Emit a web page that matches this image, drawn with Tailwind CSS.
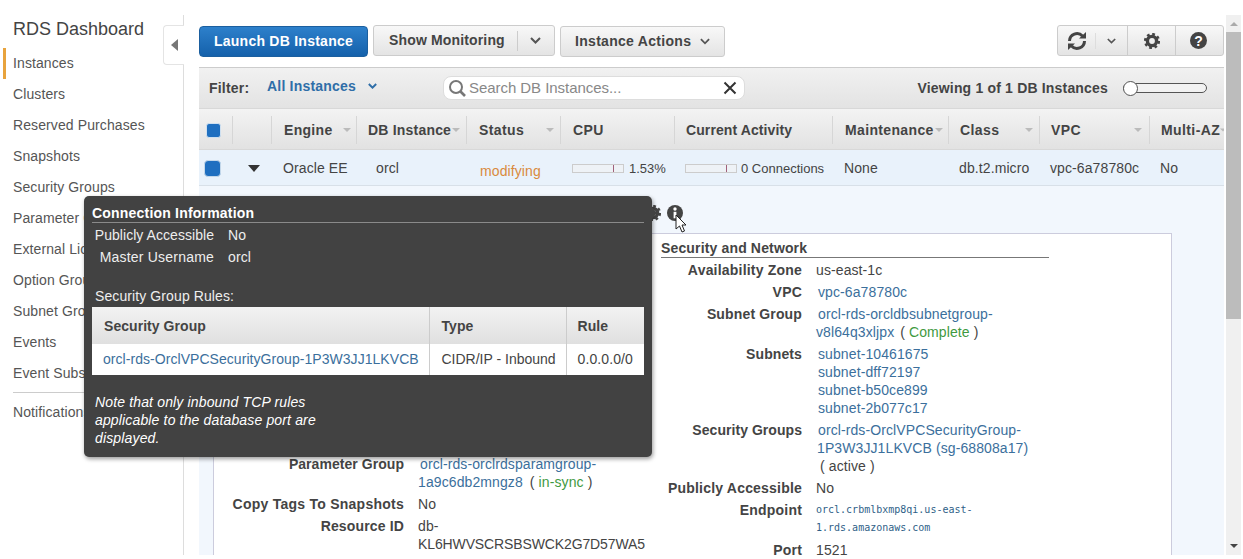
<!DOCTYPE html>
<html lang="en">
<head>
<meta charset="utf-8">
<title>RDS Dashboard</title>
<script src="https://cdn.jsdelivr.net/npm/@tailwindcss/browser@4"></script>
</head>
<body class="bg-white font-['Liberation_Sans',Arial,sans-serif] text-[14px] tracking-[0.1px] text-[#444] overflow-hidden">
<div class="relative flex h-[555px] w-[1243px] overflow-hidden">

  <!-- Sidebar -->
  <aside class="relative w-[184px] shrink-0 mt-[15px] border-r border-[#ddd]">
    <h1 class="pl-[13px] pt-[3px] h-[33px] text-[18px] leading-[22px] tracking-normal text-[#444]">RDS Dashboard</h1>
    <nav class="flex flex-col text-[#555]">
      <a class="h-[31px] leading-[30px] pl-[7px] ml-[3px] border-l-[3px] border-[#e8a33d]">Instances</a>
      <a class="h-[31px] leading-[30px] pl-[13px]">Clusters</a>
      <a class="h-[31px] leading-[30px] pl-[13px]">Reserved Purchases</a>
      <a class="h-[31px] leading-[30px] pl-[13px]">Snapshots</a>
      <a class="h-[31px] leading-[30px] pl-[13px]">Security Groups</a>
      <a class="h-[31px] leading-[30px] pl-[13px]">Parameter Groups</a>
      <a class="h-[31px] leading-[30px] pl-[13px]">External Licenses</a>
      <a class="h-[31px] leading-[30px] pl-[13px]">Option Groups</a>
      <a class="h-[31px] leading-[30px] pl-[13px]">Subnet Groups</a>
      <a class="h-[31px] leading-[30px] pl-[13px]">Events</a>
      <a class="h-[31px] leading-[30px] pl-[13px]">Event Subscriptions</a>
      <div class="ml-[13px] mt-[3px] mb-[4px] border-t border-[#ccc]"></div>
      <a class="h-[31px] leading-[30px] pl-[13px]">Notifications</a>
    </nav>
    <div class="absolute right-[-1px] top-[10px] flex h-[40px] w-[21px] items-center justify-center rounded-l-[4px] border border-r-0 border-[#e4e4e4] bg-white">
      <svg width="7" height="12" viewBox="0 0 7 12"><path d="M7 0v12L0 6z" fill="#777"/></svg>
    </div>
  </aside>

  <!-- Main -->
  <main class="ml-[15px] w-[1025px] shrink-0">
    <!-- Toolbar -->
    <div class="flex h-[67px] items-start pt-[25px]">
      <button class="mt-px h-[31px] w-[169px] rounded-[4px] border border-[#1b5f9f] bg-gradient-to-b from-[#2d80cb] to-[#1461ab] text-center text-[14px] font-bold tracking-[0.25px] text-white">Launch DB Instance</button>
      <div class="ml-[5px] flex h-[31px] w-[182px] items-center rounded-[3px] border border-[#ccc] bg-gradient-to-b from-[#f8f8f8] to-[#e4e4e4] font-bold tracking-[0.15px] text-[#444]">
        <span class="h-[20px] w-[144px] border-r border-[#ccc] pb-[2px] pl-[15px] leading-[18px]">Show Monitoring</span>
        <svg class="ml-[12px]" width="11" height="7" viewBox="0 0 11 7"><path d="M1 1l4.500 4.500L10 1" fill="none" stroke="#555" stroke-width="2"/></svg>
      </div>
      <div class="ml-[5px] mt-px flex h-[31px] w-[165px] items-center rounded-[3px] border border-[#ccc] bg-gradient-to-b from-[#f8f8f8] to-[#e4e4e4] pl-[14px] font-bold tracking-[0.3px] text-[#444]">
        <span>Instance Actions</span>
        <svg class="ml-[9px]" width="10" height="7" viewBox="0 0 11 7"><path d="M1 1l4.500 4.500L10 1" fill="none" stroke="#555" stroke-width="2"/></svg>
      </div>
      <div class="ml-auto flex h-[31px] w-[167px] items-center rounded-[3px] border border-[#ccc] bg-gradient-to-b from-[#f8f8f8] to-[#e4e4e4]">
        <div class="flex h-full w-[70px] items-center border-r border-[#ccc]">
          <span class="flex w-[37px] justify-center pt-px">
            <svg width="22" height="22" viewBox="0 0 22 22" fill="none"><path d="M3.500 11a7.500 7.500 0 0 1 13-5" stroke="#444" stroke-width="3"/><path d="M18.500 11a7.500 7.500 0 0 1-13 5" stroke="#444" stroke-width="3"/><path d="M13 8.500h7V2z" fill="#444"/><path d="M9 13.500H2V20z" fill="#444"/></svg>
          </span>
          <span class="flex h-[16px] flex-1 items-center justify-center border-l border-[#ddd]">
            <svg width="9" height="6" viewBox="0 0 11 7"><path d="M1 1l4.500 4.500L10 1" fill="none" stroke="#555" stroke-width="2"/></svg>
          </span>
        </div>
        <div class="flex h-full w-[48px] items-center justify-center border-r border-[#ccc]">
          <svg width="16" height="16" viewBox="0 0 16 16"><circle cx="8" cy="8" r="4.600" fill="none" stroke="#444" stroke-width="3.400"/><circle cx="8" cy="8" r="6.800" fill="none" stroke="#444" stroke-width="2.600" stroke-dasharray="2.700 2.640"/></svg>
        </div>
        <div class="flex flex-1 items-center justify-center">
          <span class="mr-[2px] flex h-[17px] w-[17px] items-center justify-center rounded-full bg-[#444] text-[14px] font-bold leading-none tracking-normal text-white">?</span>
        </div>
      </div>
    </div>

    <!-- Filter bar -->
    <div class="flex h-[41px] items-center border-t border-[#ccc] bg-gradient-to-b from-[#f1f1f1] to-[#e3e3e3] pl-[10px]">
      <span class="w-[58px] font-bold tracking-[0.2px] text-[#444]">Filter:</span>
      <span class="-mt-[3px] font-bold tracking-[0.2px] text-[#2f6ea8]">All Instances</span>
      <svg class="-mt-[5px] ml-[12px]" width="9" height="6" viewBox="0 0 11 7"><path d="M1 1l4.500 4.500L10 1" fill="none" stroke="#2f6ea8" stroke-width="2.400"/></svg>
      <div class="ml-[66px] flex h-[24px] w-[302px] items-center rounded-[8px] border border-[#ddd] bg-white pl-[2px]">
        <svg width="22" height="20" viewBox="0 0 22 20" fill="none"><circle cx="10" cy="9" r="6" stroke="#777" stroke-width="2"/><path d="M14.500 13.500L19 18" stroke="#777" stroke-width="2.600"/></svg>
        <span class="ml-[1px] text-[15px] tracking-[-0.05px] text-[#888]">Search DB Instances...</span>
        <svg class="ml-auto mr-[7px]" width="14" height="14" viewBox="0 0 14 14"><path d="M1.500 1.500l11 11M12.500 1.500l-11 11" stroke="#333" stroke-width="2"/></svg>
      </div>
      <span class="ml-auto font-bold tracking-[0.18px] text-[#444]">Viewing 1 of 1 DB Instances</span>
      <div class="relative ml-[15px] mr-[17px] h-[10px] w-[84px] rounded-full border border-[#555] bg-[#f2f2f2]">
        <span class="absolute -left-px -top-[3px] h-[15px] w-[15px] rounded-full border border-[#555] bg-white"></span>
      </div>
    </div>

    <!-- Table header -->
    <div class="grid h-[42px] grid-cols-[34px_39px_85px_110px_94px_114px_158px_116px_91px_110px_74px] items-center overflow-hidden border-t border-b border-[#d8d8d8] bg-gradient-to-b from-[#f3f3f3] to-[#e2e2e2] pt-[2px] font-bold tracking-[0.2px] text-[#444]">
      <div class="flex h-[28px] items-center border-r border-[#d6d6d6] pl-[7px]"><span class="h-[15px] w-[15px] rounded-[3px] border border-[#cfe0f0] bg-[#1f6fc0]"></span></div>
      <div class="h-[28px] border-r border-[#d6d6d6]"></div>
      <div class="flex h-[28px] items-center justify-between border-r border-[#d6d6d6] pl-[12px] pr-[5px]"><span class="tracking-[0.3px]">Engine</span><svg width="8" height="4" viewBox="0 0 8 4"><path d="M0 0h8L4 4z" fill="#bbb"/></svg></div>
      <div class="flex h-[28px] items-center justify-between border-r border-[#d6d6d6] pl-[11px] pr-[6px]"><span>DB Instance</span><svg width="8" height="4" viewBox="0 0 8 4"><path d="M0 0h8L4 4z" fill="#bbb"/></svg></div>
      <div class="flex h-[28px] items-center justify-between border-r border-[#d6d6d6] pl-[12px] pr-[6px]"><span class="tracking-[0.4px]">Status</span><svg width="8" height="4" viewBox="0 0 8 4"><path d="M0 0h8L4 4z" fill="#bbb"/></svg></div>
      <div class="flex h-[28px] items-center border-r border-[#d6d6d6] pl-[12px] tracking-[0.4px]">CPU</div>
      <div class="flex h-[28px] items-center border-r border-[#d6d6d6] pl-[11px] tracking-[0.1px]">Current Activity</div>
      <div class="flex h-[28px] items-center justify-between border-r border-[#d6d6d6] pl-[12px] pr-[5px]"><span class="tracking-[0.35px]">Maintenance</span><svg width="8" height="4" viewBox="0 0 8 4"><path d="M0 0h8L4 4z" fill="#bbb"/></svg></div>
      <div class="flex h-[28px] items-center justify-between border-r border-[#d6d6d6] pl-[11px] pr-[6px]"><span class="tracking-[0.4px]">Class</span><svg width="8" height="4" viewBox="0 0 8 4"><path d="M0 0h8L4 4z" fill="#bbb"/></svg></div>
      <div class="flex h-[28px] items-center justify-between border-r border-[#d6d6d6] pl-[11px] pr-[7px]"><span class="tracking-[0.4px]">VPC</span><svg width="8" height="4" viewBox="0 0 8 4"><path d="M0 0h8L4 4z" fill="#bbb"/></svg></div>
      <div class="flex h-[28px] items-center justify-between pl-[11px]"><span class="whitespace-nowrap tracking-[0.4px]">Multi-AZ</span><svg class="shrink-0" width="6" height="4" viewBox="0 0 8 4"><path d="M0 0h8L4 4z" fill="#bbb"/></svg></div>
    </div>

    <!-- Selected row -->
    <div class="grid h-[36px] grid-cols-[34px_39px_85px_110px_94px_114px_158px_116px_91px_110px_74px] items-center border-b border-[#d8e0e8] bg-[#e9f2fb] pt-[2px] text-[#444]">
      <div class="pl-[5px]"><span class="block h-[17px] w-[17px] rounded-[4px] border border-[#c4d8ea] bg-[#1f6fc0]"></span></div>
      <div class="pl-[15px]"><svg width="12" height="7" viewBox="0 0 12 7"><path d="M0 0h12L6 7z" fill="#333"/></svg></div>
      <div class="pl-[11px]">Oracle EE</div>
      <div class="pl-[19px]">orcl</div>
      <div class="pl-[13px] pt-[5px] text-[#d98a3d]">modifying</div>
      <div class="flex items-center pl-[11px] text-[13px] tracking-normal">
        <span class="relative h-[9px] w-[52px] border border-[#ccc] bg-[#eef2f6]"><span class="absolute left-[40px] top-0 h-full w-px bg-[#a0607a]"></span></span>
        <span class="ml-[5px]">1.53%</span>
      </div>
      <div class="flex items-center pl-[10px] text-[13px] tracking-normal">
        <span class="relative h-[9px] w-[52px] border border-[#ccc] bg-[#eef2f6]"><span class="absolute left-[40px] top-0 h-full w-px bg-[#a0607a]"></span></span>
        <span class="ml-[4px]">0 Connections</span>
      </div>
      <div class="pl-[11px]">None</div>
      <div class="pl-[10px]">db.t2.micro</div>
      <div class="pl-[10px]">vpc-6a78780c</div>
      <div class="pl-[10px]">No</div>
    </div>

    <!-- Detail -->
    <div class="relative h-[400px] bg-[#f2f7fd] pl-[14px] pt-[47px]">
      <div class="flex h-[400px] w-[959px] border border-b-0 border-[#ccd] bg-white">
        <!-- left column -->
        <div class="w-[447px] shrink-0 pt-[221px]">
          <dl class="grid grid-cols-[190px_1fr] gap-x-[14px] gap-y-[4px] leading-[18px]">
            <dt class="text-right font-bold tracking-[0.05px]">Parameter Group</dt>
            <dd><a class="ml-[2px] text-[#3b6f9c]">orcl-rds-orclrdsparamgroup-</a><br><a class="text-[#3b6f9c]">1a9c6db2mngz8</a> <span class="ml-[3px]">( <span class="text-[#3f9a3f]">in-sync</span> )</span></dd>
            <dt class="text-right font-bold tracking-[0.25px]">Copy Tags To Snapshots</dt>
            <dd>No</dd>
            <dt class="text-right font-bold tracking-[0.15px]">Resource ID</dt>
            <dd>db-<br><span class="tracking-[-0.12px]">KL6HWVSCRSBSWCK2G7D57WA5</span></dd>
          </dl>
        </div>
        <!-- right column -->
        <div class="w-[388px] shrink-0">
          <h3 class="h-[24px] border-b border-[#777] pt-[5px] font-bold leading-[18px] tracking-[0.15px] text-[#444]">Security and Network</h3>
          <dl class="grid grid-cols-[141px_1fr] gap-x-[14px] gap-y-[4px] pt-[3px] leading-[18px]">
            <dt class="text-right font-bold tracking-[0.2px]">Availability Zone</dt>
            <dd>us-east-1c</dd>
            <dt class="text-right font-bold tracking-[0.2px]">VPC</dt>
            <dd><a class="ml-[2px] text-[#3b6f9c]">vpc-6a78780c</a></dd>
            <dt class="text-right font-bold tracking-[0.15px]">Subnet Group</dt>
            <dd><a class="ml-[2px] text-[#3b6f9c]">orcl-rds-orcldbsubnetgroup-</a><br><a class="text-[#3b6f9c]">v8l64q3xljpx</a> <span class="ml-[2px]">( <span class="text-[#3f9a3f]">Complete</span> )</span></dd>
            <dt class="text-right font-bold tracking-[0.1px]">Subnets</dt>
            <dd class="pl-[2px] text-[#3b6f9c]">subnet-10461675<br>subnet-dff72197<br>subnet-b50ce899<br>subnet-2b077c17</dd>
            <dt class="text-right font-bold tracking-[0.05px]">Security Groups</dt>
            <dd><a class="ml-[2px] text-[#3b6f9c]">orcl-rds-OrclVPCSecurityGroup-</a><br><a class="ml-[1px] text-[#3b6f9c]">1P3W3JJ1LKVCB (sg-68808a17)</a><br><span class="ml-[4px]">( active )</span></dd>
            <dt class="text-right font-bold tracking-[0.2px]">Publicly Accessible</dt>
            <dd>No</dd>
            <dt class="text-right font-bold tracking-[0.2px]">Endpoint</dt>
            <dd class="font-['DejaVu_Sans_Mono',monospace] text-[10px] tracking-normal text-[#2f5f88]">orcl.crbmlbxmp8qi.us-east-<br>1.rds.amazonaws.com</dd>
            <dt class="text-right font-bold tracking-[0.2px]">Port</dt>
            <dd>1521</dd>
          </dl>
        </div>
      </div>
      <!-- gear and info icons beside the tooltip -->
      <svg class="absolute left-[446px] top-[19px]" width="16" height="16" viewBox="0 0 16 16"><circle cx="8" cy="8" r="4.600" fill="none" stroke="#444" stroke-width="3.400"/><circle cx="8" cy="8" r="6.800" fill="none" stroke="#444" stroke-width="2.600" stroke-dasharray="2.700 2.640"/></svg>
      <svg class="absolute left-[468px] top-[19px]" width="16" height="16" viewBox="0 0 16 16"><circle cx="8" cy="8" r="8" fill="#444"/><circle cx="8" cy="4" r="1.700" fill="#fff"/><rect x="6.600" y="6.800" width="2.800" height="6.500" fill="#fff"/></svg>
      <svg class="absolute left-[476px] top-[28px]" width="12" height="19" viewBox="0 0 12 19"><path d="M1 1v14l3.500-3 2.500 6 2.500-1-2.500-6H11z" fill="#fff" stroke="#222" stroke-width="1"/></svg>
    </div>
  </main>

  <!-- Scrollbar -->
  <div class="ml-[2px] flex h-[540px] w-[15px] shrink-0 flex-col items-center mt-[15px] bg-[#f0f0f0]">
    <svg class="mt-[7px]" width="8" height="4" viewBox="0 0 8 4"><path d="M4 0l4 4H0z" fill="#aaa"/></svg>
    <div class="mt-[6px] h-[287px] w-full bg-[#bcbcbc]"></div>
    <svg class="mt-auto mb-[7px]" width="8" height="4" viewBox="0 0 8 4"><path d="M0 0h8L4 4z" fill="#444"/></svg>
  </div>

  <!-- Connection Information tooltip -->
  <div class="absolute left-[84px] top-[196px] h-[261px] w-[568px] rounded-[5px] bg-[#424242] px-[8px] pt-[8px] text-[#eee] shadow-[1px_2px_4px_rgba(0,0,0,0.4)]">
    <div class="h-[19px] border-b border-[#8a8a8a] font-bold leading-[18px] tracking-[0.2px] text-white">Connection Information</div>
    <div class="grid grid-cols-[122px_1fr] gap-x-[14px] gap-y-[4px] pt-[3px] leading-[18px]">
      <span class="text-right tracking-[0.05px]">Publicly Accessible</span><span>No</span>
      <span class="text-right tracking-[0.2px]">Master Username</span><span>orcl</span>
    </div>
    <p class="pl-[3px] pt-[21px] leading-[18px]">Security Group Rules:</p>
    <table class="mt-[2px] w-[552px] table-fixed border-collapse bg-white text-[#444]">
      <thead>
        <tr class="h-[37px] bg-gradient-to-b from-[#f2f2f2] to-[#e0e0e0] text-left font-bold tracking-[0.05px]">
          <th class="w-[337px] pl-[12px] pt-[2px]">Security Group</th>
          <th class="w-[137px] border-l border-[#ccc] pl-[12px] pt-[2px]">Type</th>
          <th class="border-l border-[#ccc] pl-[11px] pt-[2px]">Rule</th>
        </tr>
      </thead>
      <tbody>
        <tr class="h-[31px]">
          <td class="whitespace-nowrap pl-[11px] tracking-[0.05px] text-[#3b6f9c]">orcl-rds-OrclVPCSecurityGroup-1P3W3JJ1LKVCB</td>
          <td class="border-l border-[#ccc] pl-[12px] tracking-normal">CIDR/IP - Inbound</td>
          <td class="border-l border-[#ccc] pl-[11px]">0.0.0.0/0</td>
        </tr>
      </tbody>
    </table>
    <p class="w-[240px] pl-[3px] pt-[18px] italic leading-[18px] tracking-[0.15px] text-white">Note that only inbound TCP rules applicable to the database port are displayed.</p>
    <span class="absolute -right-[5px] top-[11px] h-0 w-0 border-y-[6px] border-l-[5px] border-y-transparent border-l-[#424242]"></span>
  </div>
</div>
</body>
</html>
